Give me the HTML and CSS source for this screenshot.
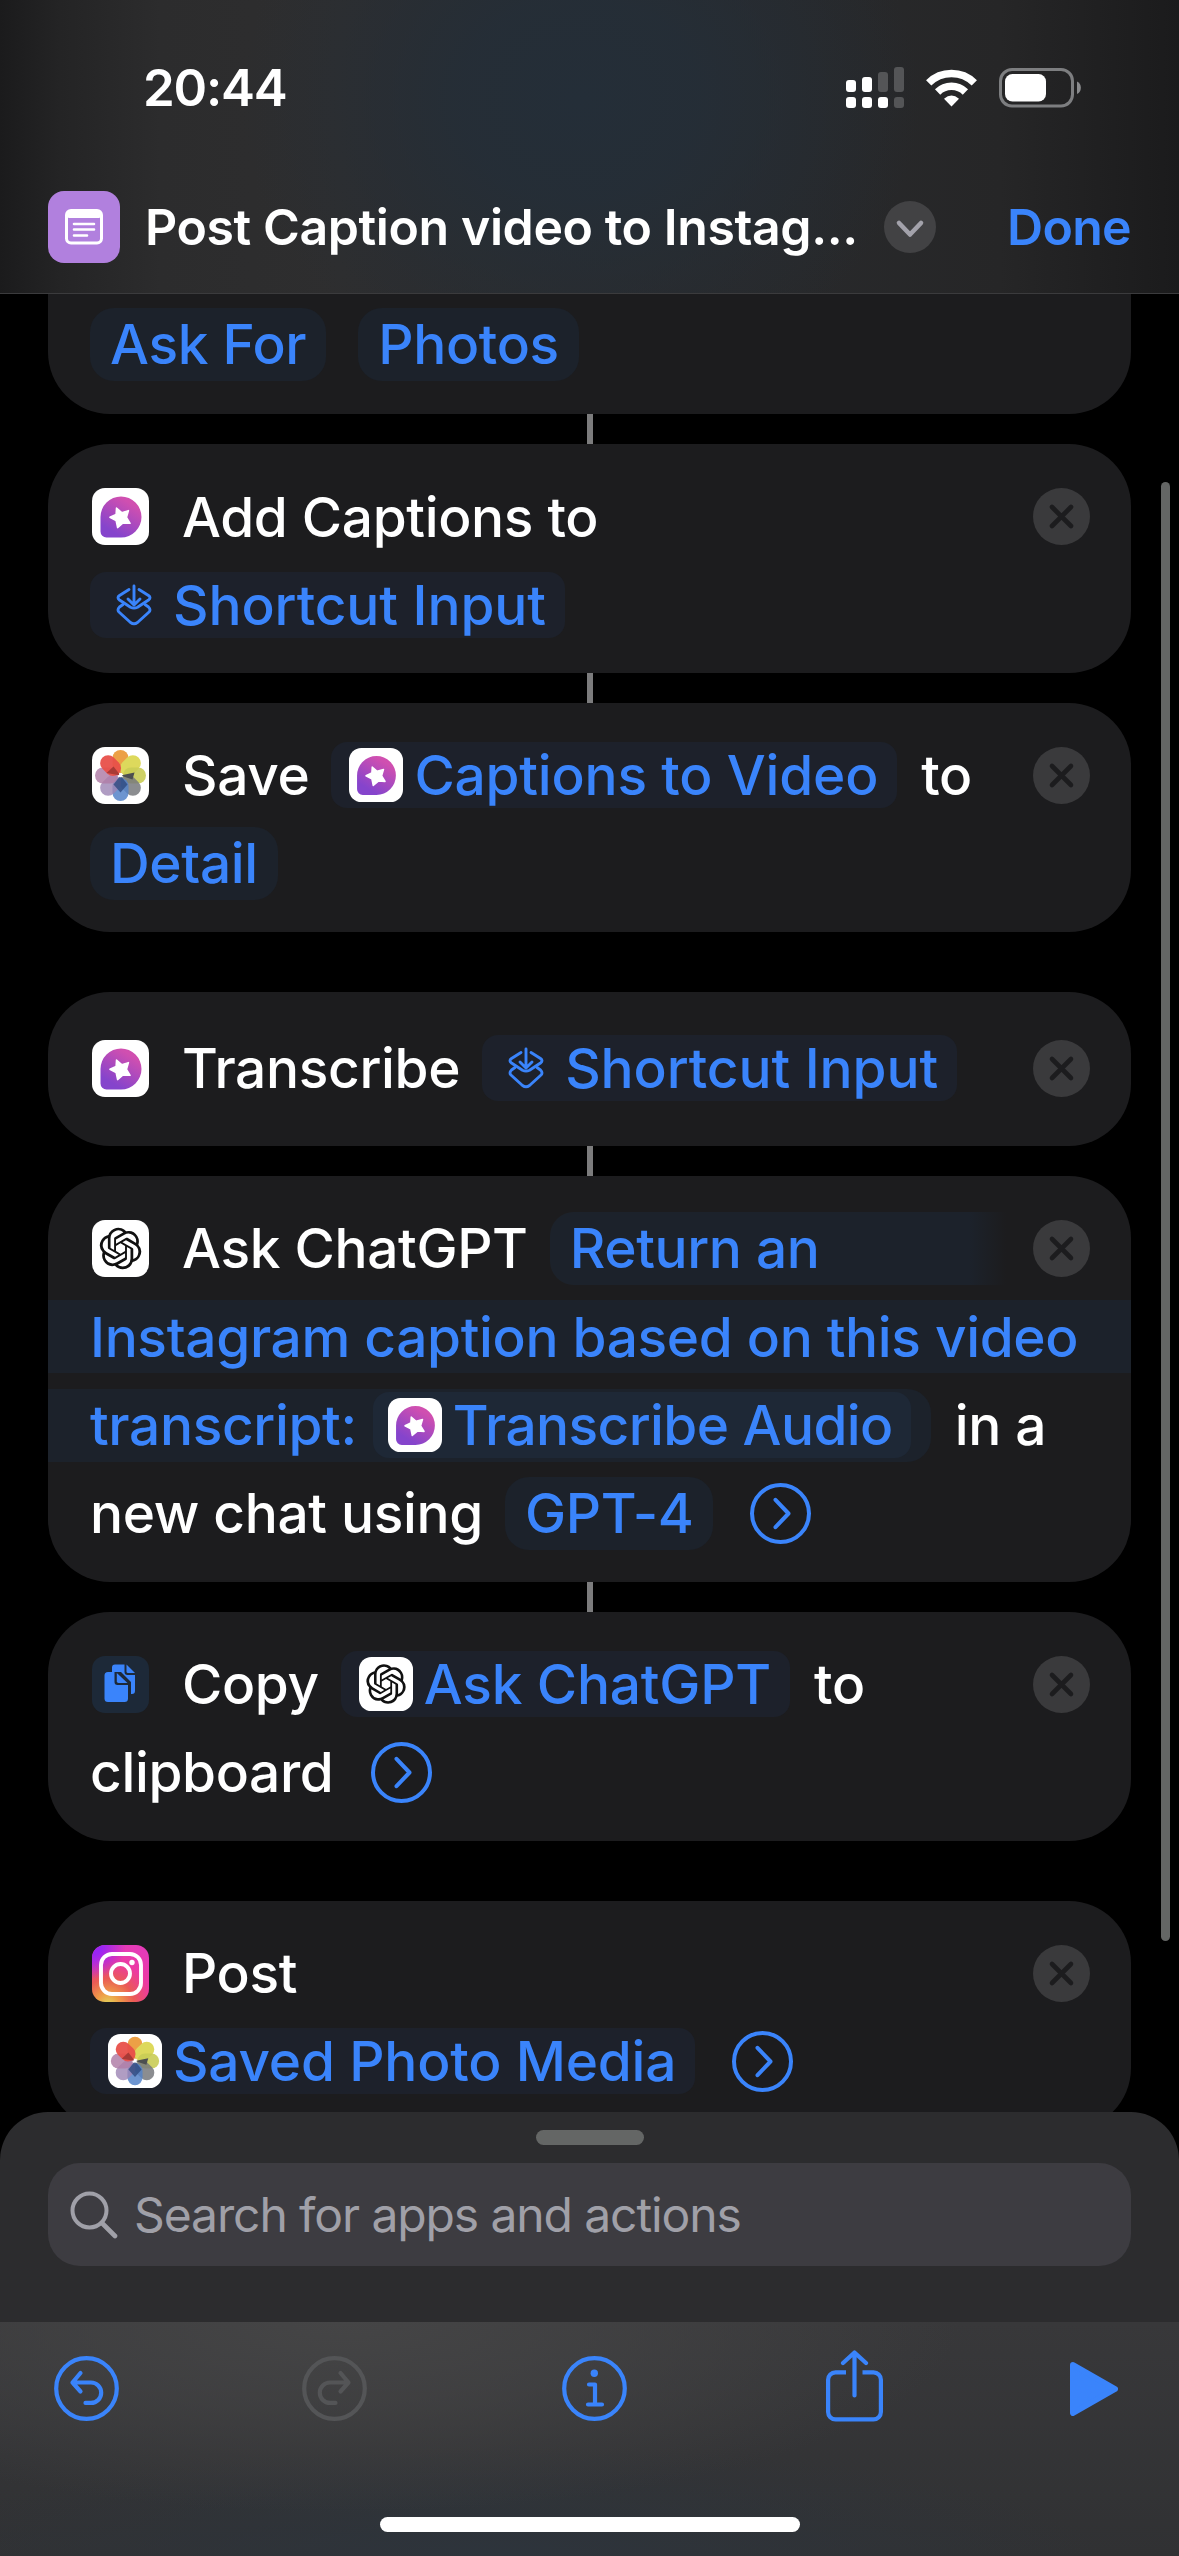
FILE: index.html
```html
<!DOCTYPE html>
<html lang="en">
<head>
    <meta charset="UTF-8">
    <meta name="viewport" content="width=device-width, initial-scale=1.0">
    <title>Post Caption video to Instagram</title>
    <link rel="stylesheet" href="styles.css">
</head>
<body>

    <!-- Shared icons -->
    <svg class="sprite" width="0" height="0">
        <defs>
            <linearGradient id="gradDetail" x1="0.8" y1="0" x2="0.2" y2="1">
                <stop offset="0.15" stop-color="#d04fb0"/>
                <stop offset="0.85" stop-color="#8544cc"/>
            </linearGradient>
            <radialGradient id="gradInsta" cx="0.28" cy="1.05" r="1.1">
                <stop offset="0" stop-color="#e0d85c"/>
                <stop offset="0.18" stop-color="#ee9f48"/>
                <stop offset="0.42" stop-color="#ea5a55"/>
                <stop offset="0.7" stop-color="#ec3aa2"/>
                <stop offset="1" stop-color="#e53bb8"/>
            </radialGradient>
            <radialGradient id="gradInstaTop" cx="0" cy="0" r="0.6">
                <stop offset="0.3" stop-color="#9a25f4"/>
                <stop offset="1" stop-color="#9a25f4" stop-opacity="0"/>
            </radialGradient>
        </defs>
        <symbol id="i-detail" viewBox="0 0 57 57">
            <rect width="57" height="57" rx="13" fill="#fff"/>
            <path d="M29 8.500a20.500 20.500 0 0 1 0 41H14.500a6 6 0 0 1-6-6V29A20.500 20.500 0 0 1 29 8.500z" fill="url(#gradDetail)"/>
            <path d="M24.500 20l5.200 4.600 6.800-2-2 6.700 3.600 6-7.100-.3-5.400 4.600-1.500-7-6.200-3.300 6.200-2.900z" fill="#fff" stroke="#fff" stroke-width="1.500" stroke-linejoin="round"/>
        </symbol>
        <symbol id="i-photos" viewBox="0 0 57 57">
            <rect width="57" height="57" rx="13" fill="#fff"/>
            <g transform="translate(28.500 28.500)">
                <rect x="-8" y="-25.500" width="16" height="23" rx="8" fill="#eca046"/>
                <rect x="-8" y="-25.500" width="16" height="23" rx="8" fill="#ddd95c" transform="rotate(45)"/>
                <rect x="-8" y="-25.500" width="16" height="23" rx="8" fill="#c9cc55" opacity=".9" transform="rotate(90)"/>
                <rect x="-8" y="-25.500" width="16" height="23" rx="8" fill="#77797c" opacity=".85" transform="rotate(135)"/>
                <rect x="-8" y="-25.500" width="16" height="23" rx="8" fill="#5482c8" opacity=".85" transform="rotate(180)"/>
                <rect x="-8" y="-25.500" width="16" height="23" rx="8" fill="#9c84b4" opacity=".8" transform="rotate(225)"/>
                <rect x="-8" y="-25.500" width="16" height="23" rx="8" fill="#b07fa8" opacity=".85" transform="rotate(270)"/>
                <rect x="-8" y="-25.500" width="16" height="23" rx="8" fill="#e8504a" opacity=".95" transform="rotate(315)"/>
                <path d="M0 0L-14-2.500-7-9z" fill="#a93a36"/>
                <path d="M0 0L14-3 12 4z" fill="#4d4f50"/>
                <path d="M0 0L7 9 0 17-7 9z" fill="#2e4a80" opacity=".8"/>
                <circle r="1.800" fill="#fff"/>
            </g>
        </symbol>
        <symbol id="i-chatgpt" viewBox="0 0 57 57">
            <rect width="57" height="57" rx="13" fill="#fff"/>
            <path transform="translate(7.700 7.700) scale(1.735)" fill="#111" d="M22.2819 9.8211a5.9847 5.9847 0 0 0-.5157-4.9108 6.0462 6.0462 0 0 0-6.5098-2.9A6.0651 6.0651 0 0 0 4.9807 4.1818a5.9847 5.9847 0 0 0-3.9977 2.9 6.0462 6.0462 0 0 0 .7427 7.0966 5.98 5.98 0 0 0 .511 4.9107 6.051 6.051 0 0 0 6.5146 2.9001A5.9847 5.9847 0 0 0 13.2599 24a6.0557 6.0557 0 0 0 5.7718-4.2058 5.9894 5.9894 0 0 0 3.9977-2.9001 6.0557 6.0557 0 0 0-.7475-7.0729zm-9.022 12.6081a4.4755 4.4755 0 0 1-2.8764-1.0408l.1419-.0804 4.7783-2.7582a.7948.7948 0 0 0 .3927-.6813v-6.7369l2.02 1.1686a.071.071 0 0 1 .038.052v5.5826a4.504 4.504 0 0 1-4.4945 4.4944zm-9.6607-4.1254a4.4708 4.4708 0 0 1-.5346-3.0137l.142.0852 4.783 2.7582a.7712.7712 0 0 0 .7806 0l5.8428-3.3685v2.3324a.0804.0804 0 0 1-.0332.0615L9.74 19.9502a4.4992 4.4992 0 0 1-6.1408-1.6464zM2.3408 7.8956a4.485 4.485 0 0 1 2.3655-1.9728V11.6a.7664.7664 0 0 0 .3879.6765l5.8144 3.3543-2.0201 1.1685a.0757.0757 0 0 1-.071 0l-4.8303-2.7865A4.504 4.504 0 0 1 2.3408 7.872zm16.5963 3.8558L13.1038 8.364 15.1192 7.2a.0757.0757 0 0 1 .071 0l4.8303 2.7913a4.4944 4.4944 0 0 1-.6765 8.1042v-5.6772a.79.79 0 0 0-.407-.667zm2.0107-3.0231l-.142-.0852-4.7735-2.7818a.7759.7759 0 0 0-.7854 0L9.409 9.2297V6.8974a.0662.0662 0 0 1 .0284-.0615l4.8303-2.7866a4.4992 4.4992 0 0 1 6.6802 4.66zM8.3065 12.863l-2.02-1.1638a.0804.0804 0 0 1-.038-.0567V6.0742a4.4992 4.4992 0 0 1 7.3757-3.4537l-.142.0805L8.704 5.459a.7948.7948 0 0 0-.3927.6813zm1.0976-2.3654l2.602-1.4998 2.6069 1.4998v2.9994l-2.5974 1.4997-2.6067-1.4997Z"/>
        </symbol>
        <symbol id="i-input" viewBox="0 0 36 42">
            <g fill="none" stroke="#3a84fb" stroke-width="2.900" stroke-linecap="round" stroke-linejoin="round">
                <path d="M13 5.500L3.500 11.500Q.5 13.700 3.500 16L14.500 23.200Q18 25 21.500 23.200L32.500 16Q35.500 13.700 32.500 11.500L23 5.500"/>
                <path d="M7 20.500L3.500 23Q.5 26 3.500 28.500L14.500 38.500Q18 41 21.500 38.500L32.500 28.500Q35.500 26 32.500 23L29 20.500"/>
                <path d="M18 2V20M12 15l6 6 6-6"/>
            </g>
        </symbol>
        <symbol id="i-copy" viewBox="0 0 57 57">
            <rect width="57" height="57" rx="13" fill="#1d2938"/>
            <path d="M20 11.500a3 3 0 0 1 3-3h9.500v7.500a3 3 0 0 0 3 3H43v16a3 3 0 0 1-3 3h-1V26l-10-10h-9z" fill="#3a84fb"/>
            <path d="M34.500 8.500L43 17h-7a1.500 1.500 0 0 1-1.500-1.500z" fill="#3a84fb"/>
            <path d="M16 16h6.500v10a3 3 0 0 0 3 3H36v13.500a3.500 3.500 0 0 1-3.500 3.500H16a3.500 3.500 0 0 1-3.500-3.500v-23A3.500 3.500 0 0 1 16 16z" fill="#3a84fb"/>
            <path d="M24.800 17L35.500 27H26.500a1.700 1.700 0 0 1-1.700-1.700z" fill="#3a84fb"/>
        </symbol>
        <symbol id="i-instagram" viewBox="0 0 57 57">
            <rect width="57" height="57" rx="13" fill="url(#gradInsta)"/>
            <rect width="57" height="57" rx="13" fill="url(#gradInstaTop)"/>
            <g fill="none" stroke="#fff" stroke-width="3.900">
                <rect x="9" y="9" width="40" height="40" rx="11"/>
                <circle cx="28.500" cy="28.500" r="9.500"/>
            </g>
            <circle cx="40" cy="17.500" r="2.700" fill="#fff"/>
        </symbol>
        <symbol id="i-close" viewBox="0 0 57 57">
            <circle cx="28.500" cy="28.500" r="28.500" fill="#3a3a3c"/>
            <path d="M19 19l19 19M38 19L19 38" stroke="#1c1c1e" stroke-width="4.600" stroke-linecap="round"/>
        </symbol>
        <symbol id="i-arrow" viewBox="0 0 61 61">
            <g fill="none" stroke="#3a84fb" stroke-width="4" stroke-linecap="round" stroke-linejoin="round">
                <circle cx="30.500" cy="30.500" r="28.500"/>
                <path d="M25.500 16.800L38.500 30.500 25.500 44.200"/>
            </g>
        </symbol>
    </svg>

    <header class="header">
        <div class="status">
            <span class="time">20:44</span>
            <div class="status-icons">
                <svg class="signal" width="58" height="41" viewBox="0 0 58 41">
                    <g fill="#fff">
                        <rect x="0" y="13" width="10" height="12" rx="3"/>
                        <rect x="16" y="10" width="10" height="15" rx="3"/>
                        <rect x="0" y="30" width="10" height="11" rx="3"/>
                        <rect x="16" y="30" width="10" height="11" rx="3"/>
                        <rect x="32" y="30" width="10" height="11" rx="3"/>
                    </g>
                    <g fill="#545557">
                        <rect x="32" y="5" width="10" height="20" rx="3"/>
                        <rect x="48" y="0" width="10" height="25" rx="3"/>
                        <rect x="48" y="30" width="10" height="11" rx="3"/>
                    </g>
                </svg>
                <svg class="wifi" width="51" height="38" viewBox="0 0 51 38">
                    <g fill="none" stroke="#fff" stroke-width="7.500">
                        <path d="M2.700 13.800a32.500 32.500 0 0 1 45.600 0"/>
                        <path d="M11.600 23a19.800 19.800 0 0 1 27.800 0"/>
                    </g>
                    <path d="M25.500 37.500L18 29.700q7.500-6.500 15 0z" fill="#fff"/>
                </svg>
                <svg class="battery" width="82" height="40" viewBox="0 0 82 40">
                    <rect x="1.500" y="1.500" width="72" height="36.500" rx="11.500" fill="none" stroke="#7d7e80" stroke-width="3"/>
                    <rect x="6" y="6" width="41" height="27.500" rx="7.500" fill="#fff"/>
                    <path d="M78 13.500a7 7 0 0 1 0 12.500z" fill="#8a8b8d"/>
                </svg>
            </div>
        </div>
        <div class="nav">
            <div class="nav-icon">
                <svg width="38" height="36" viewBox="0 0 38 36">
                    <rect x="1.500" y="1.500" width="35" height="32.500" rx="4.500" fill="none" stroke="#fff" stroke-width="3"/>
                    <rect x="1.500" y="1.500" width="35" height="7.500" rx="3" fill="#fff"/>
                    <path d="M9 15h20M9 20.500h20M9 26.500h13" stroke="#fff" stroke-width="2.600" stroke-linecap="round"/>
                </svg>
            </div>
            <h1>Post Caption video to Instag...</h1>
            <svg class="nav-chevron" width="52" height="52" viewBox="0 0 52 52">
                <circle cx="26" cy="26" r="26" fill="#424244"/>
                <path d="M15 22l11 11.500L37 22" fill="none" stroke="#a3a2ab" stroke-width="4.600" stroke-linecap="round" stroke-linejoin="round"/>
            </svg>
            <a class="done">Done</a>
        </div>
    </header>

    <main class="workflow">
        <section class="card first">
            <div class="row"><span class="chip">Ask For</span><span class="chip">Photos</span></div>
        </section>

        <div class="connector"></div>

        <section class="card">
            <div class="row">
                <svg class="app"><use href="#i-detail"/></svg>
                <span class="word">Add Captions to</span>
                <svg class="close"><use href="#i-close"/></svg>
            </div>
            <div class="row"><span class="var glyph"><svg class="input-icon"><use href="#i-input"/></svg>Shortcut Input</span></div>
        </section>

        <div class="connector"></div>

        <section class="card">
            <div class="row">
                <svg class="app"><use href="#i-photos"/></svg>
                <span class="word">Save</span>
                <span class="var"><svg class="var-app"><use href="#i-detail"/></svg>Captions to Video</span>
                <span class="word">to</span>
                <svg class="close"><use href="#i-close"/></svg>
            </div>
            <div class="row"><span class="chip">Detail</span></div>
        </section>

        <div class="break"></div>

        <section class="card single">
            <div class="row">
                <svg class="app"><use href="#i-detail"/></svg>
                <span class="word">Transcribe</span>
                <span class="var glyph"><svg class="input-icon"><use href="#i-input"/></svg>Shortcut Input</span>
                <svg class="close"><use href="#i-close"/></svg>
            </div>
        </section>

        <div class="connector"></div>

        <section class="card">
            <div class="row">
                <svg class="app"><use href="#i-chatgpt"/></svg>
                <span class="word">Ask ChatGPT</span>
                <span class="chip open">Return an</span>
                <svg class="close"><use href="#i-close"/></svg>
            </div>
            <div class="row band">Instagram caption based on this video</div>
            <div class="row">
                <span class="band band-end">transcript:<span class="var nested"><svg class="var-app"><use href="#i-detail"/></svg>Transcribe Audio</span></span>
                <span class="word">in a</span>
            </div>
            <div class="row">
                <span class="word">new chat using</span>
                <span class="chip">GPT-4</span>
                <svg class="arrow"><use href="#i-arrow"/></svg>
            </div>
        </section>

        <div class="connector"></div>

        <section class="card">
            <div class="row">
                <svg class="app"><use href="#i-copy"/></svg>
                <span class="word">Copy</span>
                <span class="var"><svg class="var-app"><use href="#i-chatgpt"/></svg>Ask ChatGPT</span>
                <span class="word">to</span>
                <svg class="close"><use href="#i-close"/></svg>
            </div>
            <div class="row"><span class="word">clipboard</span><svg class="arrow"><use href="#i-arrow"/></svg></div>
        </section>

        <div class="break"></div>

        <section class="card">
            <div class="row">
                <svg class="app"><use href="#i-instagram"/></svg>
                <span class="word">Post</span>
                <svg class="close"><use href="#i-close"/></svg>
            </div>
            <div class="row">
                <span class="var"><svg class="var-app"><use href="#i-photos"/></svg>Saved Photo Media</span>
                <svg class="arrow"><use href="#i-arrow"/></svg>
            </div>
        </section>

        <div class="scrollbar"></div>
    </main>

    <section class="sheet">
        <div class="handle"></div>
        <div class="search">
            <svg width="48" height="48" viewBox="0 0 48 48" fill="none" stroke="#a0a0a8" stroke-width="4" stroke-linecap="round">
                <circle cx="19.500" cy="19.500" r="17"/>
                <path d="M32 32l13 13" stroke-width="4.600"/>
            </svg>
            <span>Search for apps and actions</span>
        </div>
    </section>

    <footer class="toolbar">
        <div class="tools">
            <svg width="65" height="65" viewBox="0 0 65 65" fill="none" stroke="#3a84fb" stroke-width="4.200" stroke-linecap="round" stroke-linejoin="round">
                <circle cx="32.500" cy="32.500" r="30.300"/>
                <path d="M26.500 17L18.500 26.500l8 9M18.500 26.500H37a10.200 10.200 0 0 1 0 20.400h-5.500"/>
            </svg>
            <svg width="65" height="65" viewBox="0 0 65 65" fill="none" stroke="#545557" stroke-width="4.200" stroke-linecap="round" stroke-linejoin="round">
                <circle cx="32.500" cy="32.500" r="30.300"/>
                <path d="M38.500 17l8 9.500-8 9M46.500 26.500H28a10.200 10.200 0 0 0 0 20.400h5.500"/>
            </svg>
            <svg class="info" width="65" height="65" viewBox="0 0 65 65" fill="none" stroke="#3a84fb" stroke-width="4.200" stroke-linecap="round" stroke-linejoin="round">
                <circle cx="32.500" cy="32.500" r="30.300"/>
                <path d="M27 28.500h6v20M26 48.500h14"/>
                <circle cx="32.300" cy="17.300" r="3.700" fill="#3a84fb" stroke="none"/>
            </svg>
            <svg class="share" width="57" height="72" viewBox="0 0 57 72" fill="none" stroke="#3a84fb" stroke-width="4.200" stroke-linejoin="round">
                <path d="M20 22.300H9.500a7.400 7.400 0 0 0-7.400 7.400V62a7.400 7.400 0 0 0 7.400 7.400h38a7.400 7.400 0 0 0 7.400-7.400V29.700a7.400 7.400 0 0 0-7.400-7.400H36.500"/>
                <path d="M28.500 3v42.500M17 13L28.500 2.500 40 13" stroke-linecap="round"/>
            </svg>
            <svg width="48" height="54" viewBox="0 0 48 54">
                <path d="M3 3L45 27 3 51z" fill="#3a84fb" stroke="#3a84fb" stroke-width="6" stroke-linejoin="round"/>
            </svg>
        </div>
        <div class="home-bar"></div>
    </footer>

</body>
</html>
```
FILE: styles.css
```css
* {
    margin: 0;
    padding: 0;
    box-sizing: border-box;
}

body {
    width: 1179px;
    height: 2556px;
    display: flex;
    flex-direction: column;
    overflow: hidden;
    background-color: #000;
    color: #fff;
    font-family: Inter, "Liberation Sans", sans-serif;
}

svg {
    flex-shrink: 0;
    display: block;
}

.sprite {
    position: absolute;
}

/* Header */
.header {
    height: 294px;
    flex-shrink: 0;
    border-bottom: 1px solid #3b3b3d;
    background:
        radial-gradient(ellipse 340px 290px at 580px 100px, #242e38 0%, rgba(36, 46, 56, 0.85) 35%, rgba(36, 46, 56, 0.3) 75%, rgba(36, 46, 56, 0) 100%),
        linear-gradient(to right, #1b1b1c 0, #242425 60px, #2c2c2d 160px, #2e2e2f 340px, #28292b 800px, #262627 1000px, #1b1b1c 1179px);
}

.status {
    height: 175px;
    padding: 0 98px 0 143px;
    display: flex;
    align-items: center;
    justify-content: space-between;
}

.time {
    font-size: 51px;
    font-weight: 600;
    letter-spacing: -1.2px;
}

.status-icons {
    display: flex;
    align-items: center;
}

.wifi {
    margin: 0 22px;
}

.nav {
    height: 104px;
    padding: 0 48px;
    display: flex;
    align-items: center;
}

.nav-icon {
    width: 72px;
    height: 72px;
    border-radius: 16px;
    background: #b180de;
    display: flex;
    align-items: center;
    justify-content: center;
}

.nav h1 {
    width: 739px;
    margin-left: 25px;
    font-size: 50px;
    font-weight: 600;
    letter-spacing: -0.4px;
    white-space: nowrap;
}

.done {
    margin-left: auto;
    font-size: 50px;
    font-weight: 600;
    color: #3a84fb;
    letter-spacing: -0.7px;
}

/* Action list */
.workflow {
    position: relative;
    height: 1890px;
    flex-shrink: 0;
    overflow: hidden;
    font-size: 55px;
    font-weight: 500;
    letter-spacing: -0.35px;
    white-space: nowrap;
}

.card {
    margin: 0 48px;
    padding: 36px 41px 31.7px 42px;
    background: #1c1c1e;
    border-radius: 62px;
    display: flex;
    flex-direction: column;
    gap: 15.3px;
    overflow: hidden;
}

.card.first {
    height: 120px;
    padding-top: 13.5px;
    border-radius: 0 0 62px 62px;
}

.card.single {
    padding-top: 40px;
    padding-bottom: 41px;
}

.connector {
    width: 6px;
    height: 30px;
    margin: 0 auto;
    background: #7c7c7d;
}

.break {
    height: 60px;
}

.row {
    height: 73px;
    display: flex;
    align-items: center;
    flex-shrink: 0;
}

.app {
    width: 57px;
    height: 57px;
    margin-left: 2px;
    margin-right: 33px;
}

.close {
    width: 57px;
    height: 57px;
    margin-left: auto;
}

.arrow {
    width: 61px;
    height: 61px;
    margin-left: 37px;
}

.chip {
    height: 73px;
    padding: 0 20px;
    line-height: 73px;
    border-radius: 24px;
    background: #1c222b;
    color: #3a84fb;
}

.var {
    height: 66px;
    padding: 0 19px 0 18px;
    border-radius: 16px;
    background: #1d212b;
    color: #3a84fb;
    letter-spacing: -0.2px;
    display: flex;
    align-items: center;
}

.chip + .chip {
    margin-left: 32px;
}

.word + .chip,
.word + .var {
    margin-left: 22px;
}

.var + .word,
.band + .word {
    margin-left: 24px;
}

.var-app {
    width: 54px;
    height: 54px;
    margin-right: 11px;
}

.glyph {
    padding-left: 26px;
    letter-spacing: -0.1px;
}

.input-icon {
    width: 36px;
    height: 42px;
    margin-right: 21px;
}

/* Prompt text that runs over several lines */
.chip.open {
    width: 456px;
    border-radius: 24px 0 0 24px;
    background: linear-gradient(to right, #1c222b 92%, #1c1c1e 100%);
}

.band {
    height: 73px;
    margin: 0 -41px 0 -42px;
    padding-left: 42px;
    background: #1c222b;
    color: #3a84fb;
}

.band-end {
    margin-right: 0;
    padding-right: 20px;
    border-radius: 0 24px 24px 0;
    display: flex;
    align-items: center;
}

.nested {
    margin-left: 16px;
    padding-left: 15px;
    padding-right: 18px;
    background: #1e2836;
    letter-spacing: -0.6px;
}

.scrollbar {
    position: absolute;
    top: 188px;
    right: 9px;
    width: 9px;
    height: 1459px;
    border-radius: 5px;
    background: #646665;
}

/* Search sheet */
.sheet {
    position: relative;
    height: 210px;
    margin-top: -72px;
    padding: 18px 48px 0;
    flex-shrink: 0;
    border-radius: 48px 48px 0 0;
    background: #2c2c2e;
}

.handle {
    width: 108px;
    height: 15px;
    margin: 0 auto 18px;
    border-radius: 8px;
    background: #646665;
}

.search {
    height: 103px;
    padding-left: 22px;
    border-radius: 32px;
    background: #3d3c41;
    color: #a0a0a8;
    display: flex;
    align-items: center;
    gap: 16px;
    font-size: 48px;
    letter-spacing: -1.1px;
    white-space: nowrap;
}

/* Toolbar */
.toolbar {
    flex: 1;
    display: flex;
    flex-direction: column;
    align-items: center;
    justify-content: space-between;
    padding: 28px 0 24px;
    background:
        radial-gradient(ellipse 620px 190px at 340px 0, #454546 0%, rgba(69, 69, 70, 0.6) 45%, rgba(69, 69, 70, 0) 100%),
        radial-gradient(ellipse 600px 110px at 500px 234px, #2d343c 0%, rgba(45, 52, 60, 0) 100%),
        linear-gradient(to bottom, #38383a, #303133);
}

.tools {
    margin-right: 7px;
    display: flex;
    align-items: center;
    gap: 183px;
}

.info {
    margin-left: 12px;
}

.share {
    margin: 0 4px 5px 16px;
}

.home-bar {
    width: 420px;
    height: 15px;
    border-radius: 8px;
    background: #fff;
}
```
